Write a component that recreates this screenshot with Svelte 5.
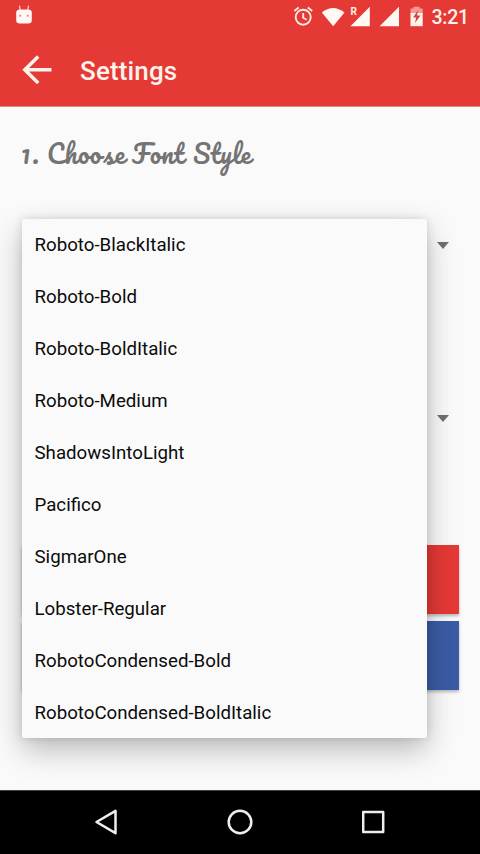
<script>
  const fonts = [
    'Roboto-BlackItalic', 'Roboto-Bold', 'Roboto-BoldItalic', 'Roboto-Medium',
    'ShadowsIntoLight', 'Pacifico', 'SigmarOne', 'Lobster-Regular',
    'RobotoCondensed-Bold', 'RobotoCondensed-BoldItalic'
  ];
</script>

<div class="screen">
  <header>
    <div class="status">
      <svg class="bot" width="18" height="20" viewBox="0 0 18 20">
        <path d="M4.5 1 5.2 5M13.5 1 12.8 5" stroke="#fbd5d0" stroke-width="1.2" stroke-linecap="round" />
        <path d="M1.2 7.5q0-3 4-3h7.6q4 0 4 3v7.5q0 3.5-3.5 3.5H4.7q-3.5 0-3.5-3.5z" fill="#fff8f4" />
        <circle cx="5.2" cy="10.7" r="1" fill="#d77d73" /><circle cx="12.7" cy="10.7" r="1" fill="#d77d73" />
      </svg>
      <div class="indicators">
        <svg width="137" height="24" viewBox="-2 0 137 24" fill="none">
          <g stroke="#ffeae3" stroke-width="1.9">
            <circle cx="10.2" cy="13.2" r="7.5" />
            <path d="M10.2 9v4.8l3.5 2M1.3 7.1 5.7 3.6M14.8 3.6 19.2 7.1" />
          </g>
          <path d="M28.8 8.6Q40-.6 51.5 8.6L40.2 22.2Z" fill="#fff8f3" />
          <path d="M76.8 2.8V22.2H57.4Z" fill="#fff8f3" />
          <path d="M106 2.8V22.2H86.6Z" fill="#fff8f3" />
          <path d="M117.5 4.5h3V2.7h6v1.8h3.2V10h-12.2z" fill="#f49a92" />
          <path d="M117.5 9h12.2v13.2h-12.2z" fill="#fff3ed" />
          <path d="m125.1 6-5 7.5h3.1L122 19l5.5-7.5h-3.4z" fill="#d34540" />
        </svg>
        <span class="roam">R</span>
        <span class="time">3:21</span>
      </div>
    </div>
    <div class="appbar">
      <svg width="30" height="30" viewBox="0 0 30 30" fill="none" stroke="#fff2eb" stroke-width="3.5">
        <path d="M29.5 14.7H3M16.2 1.4 2.8 14.7l13.4 13.3" />
      </svg>
      <h1>Settings</h1>
    </div>
  </header>

  <main>
    <h2><span class="num">1.</span><span class="choose">Choose</span><span class="font">Font</span><span class="style">Style</span></h2>
    <div class="spinner first"><i></i></div>
    <div class="spinner second"><i></i></div>
    <div class="button red"></div>
    <div class="button blue"></div>
    <ul class="menu">
      {#each fonts as font}
        <li>{font}</li>
      {/each}
    </ul>
  </main>

  <nav>
    <svg width="24" height="28" viewBox="0 0 24 28"><path d="M2.5 14 21.5 2.8V25.2Z" /></svg>
    <svg width="28" height="28" viewBox="0 0 28 28"><circle cx="14" cy="14" r="11.3" /></svg>
    <svg width="24" height="28" viewBox="0 0 24 28"><path d="M1.2 4h20v20h-20Z" /></svg>
  </nav>
</div>

<style>
  :global(body) { margin: 0; }
  .screen { width: 480px; height: 854px; display: flex; flex-direction: column; overflow: hidden; background: #fafafa; font-family: Roboto, sans-serif; }
  header { height: 107px; flex: none; background: #e53935; border-bottom: 1px solid #d8908a; box-sizing: border-box; color: #fff2eb; }
  .status { height: 34px; display: flex; justify-content: space-between; padding: 5px 11px 0 15px; box-sizing: border-box; }
  .indicators { display: flex; position: relative; margin-top: -1px; }
  .roam { position: absolute; left: 59px; top: 2px; font-size: 10px; line-height: 12px; font-weight: 700; }
  .time { font-size: 19.5px; line-height: 27px; font-weight: 500; letter-spacing: -.2px; margin-left: 3px; }
  .appbar { height: 71px; display: flex; align-items: center; padding-left: 22px; box-sizing: border-box; }
  h1 { margin: 2px 0 0 28px; font-size: 26px; line-height: 32px; font-weight: 500; letter-spacing: .15px; }
  main { flex: 1; position: relative; padding: 26px 21px 0 22px; box-sizing: border-box; }
  h2 { display: flex; margin: 0; height: 40px; font: 400 25px/40px Pacifico, Lato, cursive; color: #747474; white-space: nowrap; }
  .num { width: 26px; margin-left: -1px; letter-spacing: 2px; }
  .choose { width: 85px; letter-spacing: .6px; }
  .font { width: 61px; letter-spacing: .2px; }
  .style { width: 60px; letter-spacing: .2px; }
  .spinner { height: 52px; display: flex; align-items: center; justify-content: flex-end; padding-right: 10px; }
  .spinner i { border: 6.5px solid transparent; border-top: 7px solid #707070; border-bottom: 0; }
  .first { margin-top: 46px; }
  .second { margin-top: 121px; }
  .button { height: 69px; box-shadow: 0 2px 3px #0004; }
  .red { background: #e53935; margin-top: 100.5px; }
  .blue { background: #3b5ba5; margin-top: 7px; }
  .menu { position: absolute; left: 21.5px; top: 112px; width: 405px; height: 519px; margin: 0; padding: 0; box-sizing: border-box; list-style: none; background: #fafafa; border-radius: 2px; box-shadow: 0 12px 30px #00000042, 0 0 8px #00000020; }
  li { height: 52px; line-height: 52px; padding-left: 13px; font-size: 18.7px; color: #0b0b0b; }
  nav { height: 64px; flex: none; display: flex; justify-content: center; align-items: center; gap: 108px; background: #000; border-top: 1px solid #444; box-sizing: border-box; padding-bottom: 2px; }
  nav svg { fill: none; stroke: #eee; stroke-width: 2.5; stroke-linejoin: round; }
</style>
